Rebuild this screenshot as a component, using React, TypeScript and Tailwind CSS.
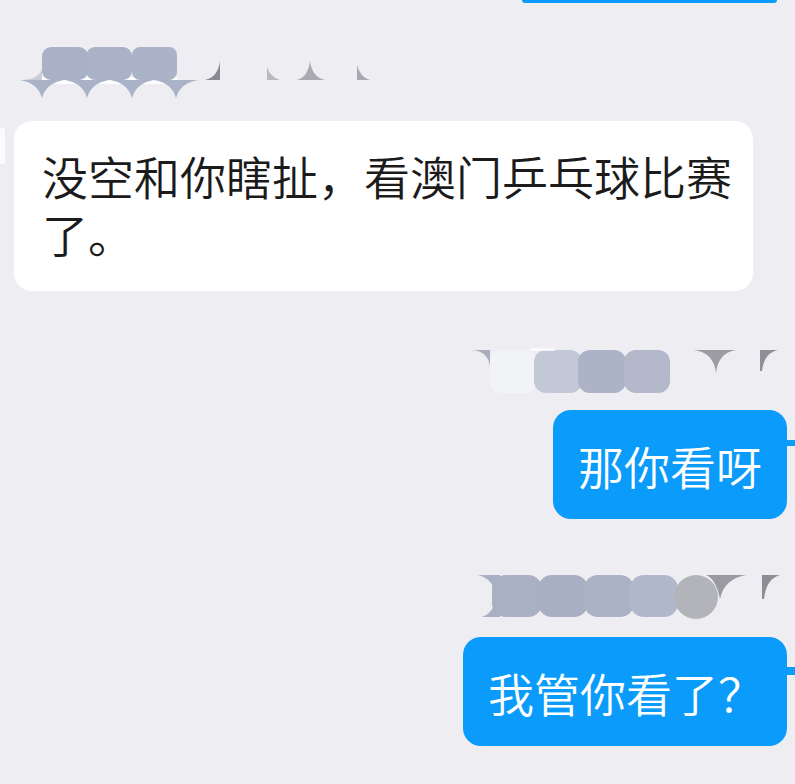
import React from "react";

const BLUE = "#0b9bfa";

function NameBlobLeft() {
  const scallops = [22, 67, 112, 156];
  return (
    <svg width="360" height="54" viewBox="0 0 360 54" className="block">
      <rect x="14" y="30" width="143" height="7" fill="#ffffff" opacity="0.95" />
      <path d="M0 33 Q18 33 22 22 L22 33 Z" fill="#c9cdd8" />
      <rect x="22" y="0" width="46" height="33" rx="9" fill="#a8b1c6" />
      <rect x="66" y="0" width="46" height="33" rx="9" fill="#a9b2c6" />
      <rect x="112" y="0" width="45" height="33" rx="8" fill="#aab3c7" />
      {scallops.map((x, i) => (
        <path
          key={i}
          d={`M${x - 22} 33 Q${x - 4} 36 ${x} 51 Q${x + 4} 36 ${x + 22} 33 Z`}
          fill="#a9b2c6"
        />
      ))}
      <path d="M185 33 Q198 30 200 14 L200 33 Z" fill="#8a8a92" />
      <path d="M247 33 L247 20 Q250 30 260 33 Z" fill="#b8b8c0" />
      <path d="M277 33 Q288 30 290 14 Q292 30 305 33 Z" fill="#a9a9b2" />
      <path d="M337 33 L337 18 Q340 30 350 33 Z" fill="#a8a8b0" />
    </svg>
  );
}

function NameBlobRight1() {
  return (
    <svg width="312" height="46" viewBox="0 0 312 46" className="block">
      <path d="M0 3 Q18 3 20 20 L20 3 Z" fill="#a8aebc" />
      <rect x="20" y="3" width="46" height="43" rx="10" fill="#f2f3f7" />
      <rect x="64" y="3" width="48" height="43" rx="12" fill="#c3c8d6" />
      <rect x="108" y="3" width="48" height="43" rx="12" fill="#adb3c6" />
      <rect x="154" y="3" width="46" height="43" rx="12" fill="#b3b9cb" />
      <rect x="60" y="1" width="25" height="3" fill="#ffffff" opacity="0.7" />
      <path d="M224 3 L266 3 Q248 6 246 26 Q244 6 224 3 Z" fill="#9c9ca4" />
      <path d="M290 3 L308 3 Q294 6 292 24 L290 24 Z" fill="#8f8f98" />
    </svg>
  );
}

function NameBlobRight2() {
  return (
    <svg width="312" height="48" viewBox="0 0 312 48" className="block">
      <path d="M8 2 Q24 6 26 24 Q24 40 12 44 L30 44 L30 2 Z" fill="#a9b0c2" />
      <rect x="22" y="2" width="50" height="42" rx="14" fill="#a9b0c2" />
      <rect x="68" y="2" width="50" height="42" rx="14" fill="#a8afc2" />
      <rect x="114" y="2" width="50" height="42" rx="14" fill="#aab2c5" />
      <rect x="160" y="2" width="48" height="42" rx="14" fill="#b0b8ca" />
      <circle cx="226" cy="24" r="22" fill="#b3b3ba" />
      <path d="M236 2 L276 2 Q254 6 250 26 Q246 6 236 2 Z" fill="#9a9aa2" />
      <path d="M292 2 L310 2 Q296 6 294 26 L292 26 Z" fill="#8d8d96" />
    </svg>
  );
}

export default function App() {
  const font = { fontFamily: '"Noto Sans CJK SC", "Noto Sans", sans-serif' };
  return (
    <div
      className="relative w-[795px] h-[784px] overflow-hidden bg-[#ededf2] flex flex-col font-[350]"
      style={font}
    >
      <div className="absolute left-0 top-[128px] w-[5px] h-[36px] rounded-r-[3px] bg-white/80" />

      <div
        className="self-end mr-[18px] w-[255px] h-[3px] rounded-b-[3px]"
        style={{ backgroundColor: BLUE }}
      />

      <div className="mt-[44px] ml-[20px]">
        <NameBlobLeft />
      </div>

      <div className="mt-[20px] ml-[14px] w-[739px] rounded-[18px] bg-white pl-[28px] pr-[12px] pt-[25px] pb-[29px] text-[46px] leading-[58px] text-[#1b1b1b]">
        没空和你瞎扯，看澳门乒乓球比赛了。
      </div>

      <div className="mt-[56px] ml-[470px]">
        <NameBlobRight1 />
      </div>

      <div className="relative self-end mr-[8px] mt-[17px]">
        <div
          className="h-[109px] rounded-[18px] flex items-center pl-[25px] pr-[25px] text-[46px] leading-none text-white"
          style={{ backgroundColor: BLUE }}
        >
          那你看呀
        </div>
        <div
          className="absolute -right-[8px] top-[30px] w-[9px] h-[6px]"
          style={{ backgroundColor: BLUE }}
        />
      </div>

      <div className="mt-[54px] ml-[470px]">
        <NameBlobRight2 />
      </div>

      <div className="relative self-end mr-[8px] mt-[16px]">
        <div
          className="h-[109px] rounded-[18px] flex items-center pl-[25px] pr-[23px] text-[46px] leading-none text-white"
          style={{ backgroundColor: BLUE }}
        >
          我管你看了？
        </div>
        <div
          className="absolute -right-[8px] top-[30px] w-[9px] h-[8px]"
          style={{ backgroundColor: BLUE }}
        />
      </div>
    </div>
  );
}
